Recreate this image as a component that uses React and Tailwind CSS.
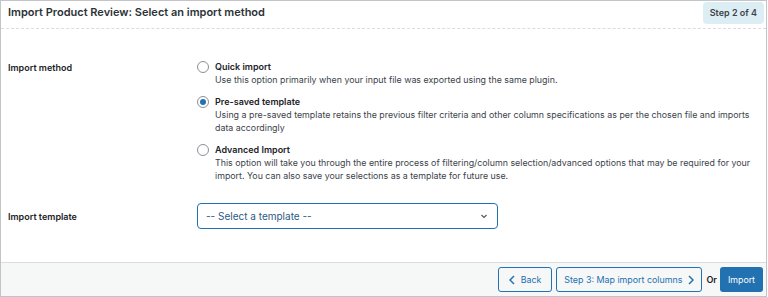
import { useState } from "react";

const options = [
  {
    id: "quick",
    title: "Quick import",
    desc: "Use this option primarily when your input file was exported using the same plugin.",
  },
  {
    id: "template",
    title: "Pre-saved template",
    desc: "Using a pre-saved template retains the previous filter criteria and other column specifications as per the chosen file and imports data accordingly",
  },
  {
    id: "advanced",
    title: "Advanced Import",
    desc: "This option will take you through the entire process of filtering/column selection/advanced options that may be required for your import. You can also save your selections as a template for future use.",
  },
];

function Radio({ checked }) {
  return (
    <span className="mt-[1px] flex h-[12px] w-[12px] shrink-0 items-center justify-center rounded-full border border-[#8c8f94] bg-white">
      {checked && <span className="h-[6px] w-[6px] rounded-full bg-[#2271b1]" />}
    </span>
  );
}

export default function App() {
  const [method, setMethod] = useState("template");

  return (
    <div className="flex h-[297px] w-[767px] flex-col border border-[#c3c4c7] bg-white font-['Inter',sans-serif] text-[#1d2327]">
      {/* header */}
      <div className="flex h-[28px] items-start justify-between border-b border-dashed border-[#dcdcde] pl-[7px] pr-[2px]">
        <h2 className="mt-[4px] text-[11px] font-semibold leading-[15px] text-[#2c3338]">
          Import Product Review: Select an import method
        </h2>
        <span className="mt-[1px] rounded-[4px] bg-[#dcedf4] px-[7px] py-[4px] text-[9px] font-semibold leading-[14px] text-[#3c434a]">
          Step 2 of 4
        </span>
      </div>

      {/* body */}
      <div className="flex-1 pl-[7px] pt-[31px]">
        <div className="flex">
          <div className="w-[189px] shrink-0 pt-[1px] text-[9px] font-semibold leading-[13px]">Import method</div>
          <div className="flex flex-col gap-[9px] pr-[6px]">
            {options.map((o) => (
              <label key={o.id} className="flex cursor-pointer gap-[6px]" onClick={() => setMethod(o.id)}>
                <Radio checked={method === o.id} />
                <div>
                  <div className="text-[9px] font-semibold leading-[13px]">{o.title}</div>
                  <p className="text-[8.85px] leading-[13px] text-[#3c434a]">{o.desc}</p>
                </div>
              </label>
            ))}
          </div>
        </div>

        <div className="mt-[21px] flex items-center">
          <div className="w-[189px] shrink-0 text-[9px] font-semibold leading-[13px]">Import template</div>
          <button className="flex h-[26px] w-[301px] items-center justify-between rounded-[4px] border border-[#2271b1] px-[8px] text-[10px] text-[#2c5a85]">
            -- Select a template --
            <svg width="10" height="10" viewBox="0 0 10 10" fill="none">
              <path d="M2.5 4 5 6.5 7.5 4" stroke="#50575e" strokeWidth="1.1" />
            </svg>
          </button>
        </div>
      </div>

      {/* footer */}
      <div className="flex h-[34px] items-center justify-end border-t border-[#dcdcde] bg-[#f6f7f7] pr-[3px]">
        <button className="flex h-[25px] items-center gap-[6px] rounded-[3px] border border-[#2271b1] bg-[#f6f7f7] px-[10px] text-[8.8px] text-[#2271b1]">
          <svg width="6" height="10" viewBox="0 0 6 10" fill="none">
            <path d="M5 1 1 5l4 4" stroke="#2271b1" strokeWidth="1.5" />
          </svg>
          Back
        </button>
        <button className="ml-[4px] flex h-[25px] items-center gap-[6px] rounded-[3px] border border-[#2271b1] bg-[#f6f7f7] px-[7px] text-[8.9px] text-[#2271b1]">
          Step 3: Map import columns
          <svg width="6" height="10" viewBox="0 0 6 10" fill="none">
            <path d="M1 1l4 4-4 4" stroke="#2271b1" strokeWidth="1.5" />
          </svg>
        </button>
        <span className="ml-[4px] text-[9px] font-semibold text-[#1d2327]">Or</span>
        <button className="ml-[3px] h-[25px] rounded-[3px] bg-[#2271b1] px-[8px] text-[8.8px] text-white">Import</button>
      </div>
    </div>
  );
}
